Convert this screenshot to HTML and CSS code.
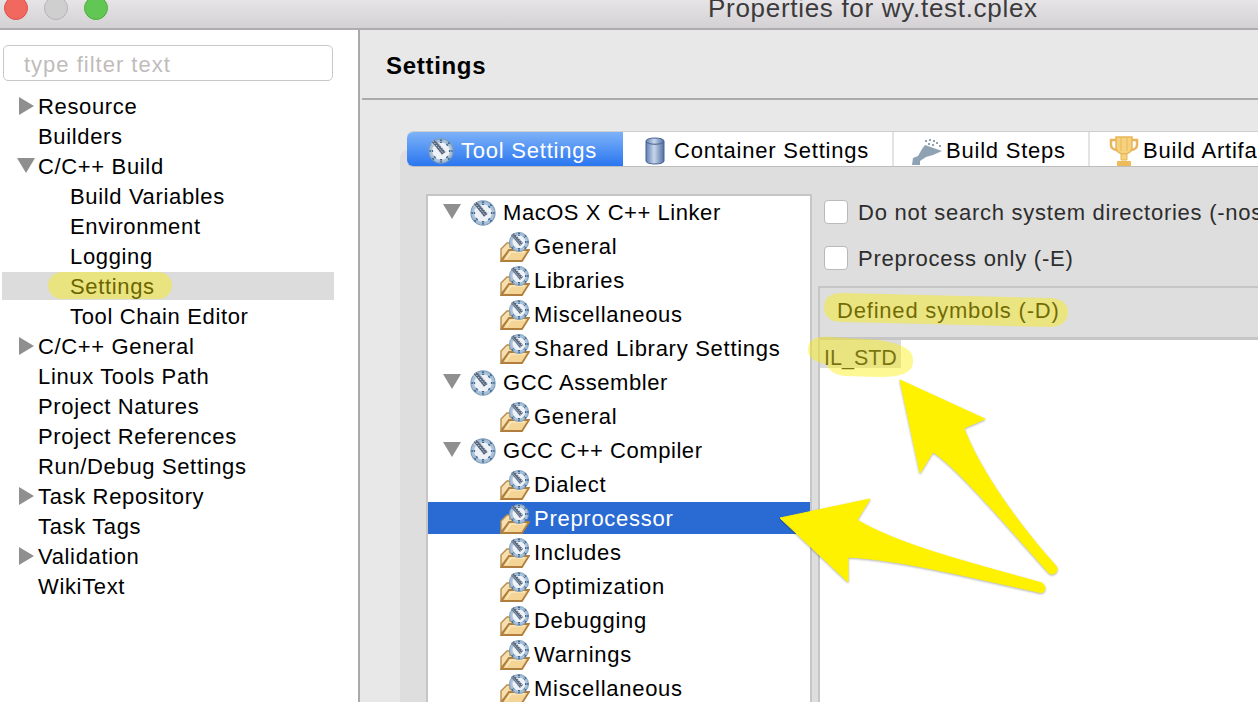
FILE: index.html
```html
<!DOCTYPE html>
<html lang="en">
<head>
  <meta charset="UTF-8">
  <title>Properties for wy.test.cplex</title>
  <link rel="stylesheet" href="styles.css">
</head>
<body>
  <!-- shared icons -->
  <svg class="defs" width="0" height="0">
    <defs>
      <symbol id="gear" viewBox="0 0 28 28">
        <circle cx="14" cy="14" r="13" fill="#a9c1d8"/>
        <circle cx="14" cy="14" r="13" fill="none" stroke="#7f9cb8" stroke-width="1.2"/>
        <circle cx="14" cy="14" r="9.5" fill="#eef2f6"/>
        <path d="M14 1.5v4M14 22.5v4M1.5 14h4M22.500 14h4M23 5l-3 3M23 23l-3-3M5 23l3-3" stroke="#3f6a96" stroke-width="2.4" stroke-dasharray="1.6 1"/>
        <path d="M4 4l4-2 11 13-4 3z" fill="#56677f"/>
        <path d="M5 3l12 14M8 2.500l10 12M4 6l10 11" stroke="#e6ebf0" stroke-width="1" stroke-dasharray="1.5 1.5"/>
      </symbol>
      <symbol id="folder" viewBox="0 0 30 30">
        <path d="M1 28V17l6-6h3v4h9l-10 3z" fill="#f6dfae" stroke="#b88c4f" stroke-width="1.4"/>
        <path d="M1.500 29L9 18h20l-7 11z" fill="#f4d596" stroke="#b07f3e" stroke-width="1.8"/>
        <path d="M6 27l5-7h14" fill="none" stroke="#fdf0d0" stroke-width="1.2"/>
        <circle cx="19" cy="10" r="9.500" fill="#a9c1d8" stroke="#7f9cb8"/>
        <circle cx="19" cy="10" r="6.500" fill="#eef2f6"/>
        <path d="M19 .8v3M19 16v3M25 10h3.500M26 3.500l-2 2M26 16.500l-2-2M12 16.500l2-2" stroke="#3f6a96" stroke-width="2" stroke-dasharray="1.4 .8"/>
        <path d="M11 3l3-2 9 10-3 3z" fill="#56677f"/>
        <path d="M12 2.500l9 10.500M14.500 2l8 9.500" stroke="#e6ebf0" stroke-width=".9" stroke-dasharray="1.300 1.300"/>
      </symbol>
    </defs>
  </svg>

  <div class="window">
    <div class="titlebar">
      <div class="lights">
        <span class="light red"></span>
        <span class="light grey"></span>
        <span class="light green"></span>
      </div>
      <div class="title">Properties for wy.test.cplex</div>
    </div>

    <div class="main">
      <div class="sidebar">
        <div class="filter">type filter text</div>
        <ul class="nav">
          <li><i class="arrow right"></i>Resource</li>
          <li class="top">Builders</li>
          <li><i class="arrow down"></i>C/C++ Build</li>
          <li class="sub">Build Variables</li>
          <li class="sub">Environment</li>
          <li class="sub">Logging</li>
          <li class="sub current">Settings</li>
          <li class="sub">Tool Chain Editor</li>
          <li><i class="arrow right"></i>C/C++ General</li>
          <li class="top">Linux Tools Path</li>
          <li class="top">Project Natures</li>
          <li class="top">Project References</li>
          <li class="top">Run/Debug Settings</li>
          <li><i class="arrow right"></i>Task Repository</li>
          <li class="top">Task Tags</li>
          <li><i class="arrow right"></i>Validation</li>
          <li class="top">WikiText</li>
        </ul>
      </div>

      <div class="content">
        <div class="heading">Settings</div>
        <div class="tabs-area">
          <div class="panel">
            <div class="tool-tree">
              <div class="node"><i class="arrow down"></i><svg class="gear"><use href="#gear"/></svg>MacOS X C++ Linker</div>
              <div class="leaf"><svg class="folder"><use href="#folder"/></svg>General</div>
              <div class="leaf"><svg class="folder"><use href="#folder"/></svg>Libraries</div>
              <div class="leaf"><svg class="folder"><use href="#folder"/></svg>Miscellaneous</div>
              <div class="leaf"><svg class="folder"><use href="#folder"/></svg>Shared Library Settings</div>
              <div class="node"><i class="arrow down"></i><svg class="gear"><use href="#gear"/></svg>GCC Assembler</div>
              <div class="leaf"><svg class="folder"><use href="#folder"/></svg>General</div>
              <div class="node"><i class="arrow down"></i><svg class="gear"><use href="#gear"/></svg>GCC C++ Compiler</div>
              <div class="leaf"><svg class="folder"><use href="#folder"/></svg>Dialect</div>
              <div class="leaf selected"><svg class="folder"><use href="#folder"/></svg>Preprocessor</div>
              <div class="leaf"><svg class="folder"><use href="#folder"/></svg>Includes</div>
              <div class="leaf"><svg class="folder"><use href="#folder"/></svg>Optimization</div>
              <div class="leaf"><svg class="folder"><use href="#folder"/></svg>Debugging</div>
              <div class="leaf"><svg class="folder"><use href="#folder"/></svg>Warnings</div>
              <div class="leaf"><svg class="folder"><use href="#folder"/></svg>Miscellaneous</div>
            </div>
            <div class="options">
              <label class="check"><span class="box"></span>Do not search system directories (-nostdinc)</label>
              <label class="check"><span class="box"></span>Preprocess only (-E)</label>
              <div class="symbols">
                <div class="symbols-head">Defined symbols (-D)</div>
                <div class="symbols-body"><span class="symbol-row">IL_STD</span></div>
              </div>
            </div>
          </div>
          <div class="tabs">
            <div class="tab active"><svg class="gear"><use href="#gear"/></svg>Tool Settings</div>
            <div class="tab container-tab">
              <svg class="tab-icon" width="20" height="28" viewBox="0 0 20 28">
                <defs><linearGradient id="can" x1="0" x2="1"><stop offset="0" stop-color="#5d7fb5"/><stop offset=".45" stop-color="#c9d6ea"/><stop offset="1" stop-color="#4f70a6"/></linearGradient></defs>
                <path d="M1 4c0-4 18-4 18 0v20c0 4-18 4-18 0z" fill="url(#can)" stroke="#47638f"/>
                <path d="M1 5c3 3 15 3 18 0" fill="none" stroke="#47638f"/>
              </svg>
              Container Settings
            </div>
            <div class="tab steps-tab">
              <svg class="tab-icon" width="30" height="28" viewBox="0 0 30 28" fill="#8ea2b4">
                <path d="M13 8l17 6-9 4-7 2-6 4v4H0l1-7 5-2 4-7z"/>
                <path d="M13 3h2v2h-2zM17 2h2v2h-2zM21 3h2v2h-2zM24 5h2v2h-2zM27 8h2v2h-2zM16 6h2v2h-2zM20 7h2v2h-2z"/>
              </svg>
              Build Steps
            </div>
            <div class="tab artifact-tab">
              <svg class="tab-icon" width="32" height="30" viewBox="0 0 32 30">
                <path d="M8 1h16v11c0 4-4 6-8 6s-8-2-8-6z" fill="#f6d27e" stroke="#e8b659" stroke-width="1.500"/>
                <path d="M8 4H3v5c0 3 3 5 6 5M24 4h5v5c0 3-3 5-6 5" fill="none" stroke="#e8b659" stroke-width="2.500"/>
                <path d="M13 2v13M19 2v13" stroke="#e8b659"/>
                <path d="M13 18h6v6h-6z" fill="#f6d27e" stroke="#e8b659"/>
                <rect x="9" y="25" width="14" height="5" fill="#eebb5c"/>
              </svg>
              Build Artifact
            </div>
          </div>
        </div>
      </div>
    </div>

    <!-- markup drawn on top of the screenshot -->
    <svg class="arrows" width="1258" height="702" viewBox="0 0 1258 702">
      <rect class="marker" x="48" y="272" width="124" height="27" rx="13.500"/>
      <path class="marker" d="M824 308C824 298 830 293 842 293L1050 298C1064 299 1068 305 1068 312 1068 322 1060 327 1050 327L842 322C830 322 824 316 824 308z"/>
      <path class="marker" d="M808 350C808 340 815 336 830 337L880 340C905 345 914 350 913 362 913 373 900 377 880 377L845 376C832 375 828 368 826 364 815 362 808 358 808 350z"/>
      <path class="arrow-shape" d="M900 380L985 419 964 428C975 460 1010 515 1056 566 1060 572 1052 577 1048 572 1010 530 960 470 933 452L920 473z"/>
      <path class="arrow-shape" d="M780 518L870 499 857 520C900 545 960 560 1042 583 1048 588 1044 595 1038 592 960 575 900 560 848 557L848 582z"/>
    </svg>
  </div>
</body>
</html>
```

FILE: styles.css
```css
body {
  margin: 0;
  font-family: "Liberation Sans", Arial, sans-serif;
  font-size: 22px;
  letter-spacing: 0.65px;
  color: #000;
  background: #e8e8e8;
}
.defs {
  display: block;
  height: 0;
}
.window {
  position: relative;
  width: 1258px;
  height: 702px;
  overflow: hidden;
  display: flex;
  flex-direction: column;
}

/* title bar */
.titlebar {
  box-sizing: border-box;
  height: 30px;
  flex: none;
  display: flex;
  align-items: center;
  padding: 0 0 12px 4px;
  background: linear-gradient(#e6e4e6, #d3d1d3);
  border-bottom: 2px solid #aeacae;
}
.lights {
  display: flex;
  gap: 16px;
}
.light {
  box-sizing: border-box;
  width: 24px;
  height: 24px;
  border-radius: 50%;
  border: 1px solid;
}
.red {
  background: #f1685e;
  border-color: #de5248;
}
.grey {
  background: #d0cfd0;
  border-color: #b5b4b5;
}
.green {
  background: #62c654;
  border-color: #4eae42;
}
.title {
  margin-left: 600px;
  font-size: 26px;
  letter-spacing: 0.7px;
  color: #3c3a3c;
  white-space: nowrap;
}

.main {
  flex: 1;
  display: flex;
  min-height: 0;
}

/* left tree */
.sidebar {
  box-sizing: border-box;
  width: 360px;
  flex: none;
  background: #fff;
  border-right: 2px solid #a9a9a9;
  padding: 15px 0 0 0;
}
.filter {
  box-sizing: border-box;
  width: 330px;
  height: 36px;
  margin-left: 3px;
  padding-left: 20px;
  line-height: 37px;
  letter-spacing: 1px;
  color: #c0bcbc;
  border: 1px solid #c8c8c8;
  border-radius: 5px;
}
.nav {
  list-style: none;
  margin: 11px 0 0 0;
  padding: 0 0 0 2px;
  width: 332px;
}
.nav li {
  box-sizing: border-box;
  height: 30px;
  line-height: 30px;
  padding-left: 36px;
  position: relative;
  white-space: nowrap;
}
.nav li.sub {
  padding-left: 68px;
}
.nav li.current {
  background: #dcdcdc;
  border-bottom: 2px solid #fff;
}
.arrow {
  position: absolute;
  width: 0;
  height: 0;
}
.arrow.right {
  left: 17px;
  top: 5px;
  border-left: 15px solid #8f8f8f;
  border-top: 9px solid transparent;
  border-bottom: 9px solid transparent;
}
.arrow.down {
  left: 15px;
  top: 6px;
  border-top: 15px solid #8f8f8f;
  border-left: 9px solid transparent;
  border-right: 9px solid transparent;
}

/* right side */
.content {
  flex: 1;
  min-width: 0;
  display: flex;
  flex-direction: column;
  background: #e8e8e8;
}
.heading {
  box-sizing: border-box;
  height: 70px;
  flex: none;
  margin-left: 2px;
  padding: 22px 0 0 24px;
  font-size: 24px;
  font-weight: bold;
  letter-spacing: 0.7px;
  border-bottom: 2px solid #aaa;
}
.tabs-area {
  position: relative;
  flex: 1;
  padding: 50px 0 0 40px;
}
.panel {
  display: flex;
  height: 100%;
  padding: 44px 0 0 26px;
  background: #dedede;
  border-radius: 8px 0 0 0;
  box-sizing: border-box;
}
.tabs {
  position: absolute;
  left: 47px;
  top: 32px;
  height: 34px;
  display: flex;
  letter-spacing: 0.78px;
  background: #fff;
  border-bottom: 1px solid #bdbdbd;
  box-shadow: 0 -1px 0 #cfcfcf;
  border-radius: 6px 0 0 6px;
  width: 860px;
}
.tab {
  display: flex;
  flex: none;
  align-items: center;
  white-space: nowrap;
  height: 34px;
  padding-top: 4px;
  border-right: 2px solid #e4e4e4;
  box-sizing: border-box;
}
.tab-icon {
  flex: none;
}
.tab.active {
  width: 216px;
  padding-left: 21px;
  gap: 7px;
  color: #fff;
  background: linear-gradient(#7db2f8, #2a76f0);
  border: 0;
  border-radius: 6px 0 0 6px;
}
.container-tab {
  width: 271px;
  padding-left: 22px;
  gap: 9px;
}
.steps-tab {
  width: 196px;
  padding-left: 18px;
  gap: 4px;
}
.artifact-tab {
  width: 240px;
  padding-left: 18px;
  gap: 3px;
  border: 0;
}
.gear {
  width: 26px;
  height: 26px;
  flex: none;
}
.folder {
  width: 30px;
  height: 30px;
  flex: none;
}

/* tool tree */
.tool-tree {
  box-sizing: border-box;
  width: 386px;
  flex: none;
  letter-spacing: 0.72px;
  background: #fff;
  border: 2px solid #c6c6c6;
  border-bottom: 0;
  overflow: hidden;
}
.node, .leaf {
  box-sizing: border-box;
  height: 34px;
  padding-top: 2px;
  display: flex;
  align-items: center;
  white-space: nowrap;
  position: relative;
}
.node:first-child {
  margin-top: -1px;
}
.node {
  padding-left: 42px;
  gap: 7px;
  letter-spacing: 0.55px;
}
.node .arrow.down {
  left: 15px;
  top: 9px;
}
.leaf {
  padding-left: 72px;
  gap: 4px;
}
.leaf.selected {
  background: #2a6bd3;
  background-clip: padding-box;
  border-top: 1px solid transparent;
  border-bottom: 1px solid transparent;
  color: #fff;
}

/* options on the right */
.options {
  flex: 1;
  min-width: 0;
  margin-top: -4px;
  padding-left: 6px;
  letter-spacing: 0.75px;
}
.check {
  height: 46px;
  display: flex;
  align-items: center;
  gap: 10px;
  padding-left: 6px;
  color: #2d2d2d;
  white-space: nowrap;
}
.box {
  box-sizing: border-box;
  width: 24px;
  height: 24px;
  margin-top: -2px;
  background: #fff;
  border: 1px solid #b9b9b9;
  border-radius: 4px;
  flex: none;
}
.symbols {
  margin-top: 4px;
  border-left: 2px solid #c6c6c6;
  border-top: 2px solid #c6c6c6;
}
.symbols-head {
  height: 52px;
  line-height: 46px;
  padding-left: 17px;
  letter-spacing: 0.8px;
  color: #0c0c0c;
  border-bottom: 3px solid #c6c6c6;
  box-sizing: border-box;
}
.symbols-body {
  height: 400px;
  background: #fff;
}
.symbol-row {
  display: block;
  box-sizing: border-box;
  width: 81px;
  height: 28px;
  line-height: 36px;
  padding-left: 4px;
  font-size: 21.5px;
  letter-spacing: 0;
  background: #dcdcdc;
  color: #1c1c1c;
}

/* annotations */
.arrows {
  position: absolute;
  left: 0;
  top: 0;
}
.marker {
  fill: rgba(250, 235, 0, 0.42);
}
.arrow-shape {
  fill: #fff200;
  stroke: #fff200;
  stroke-width: 1;
  filter: drop-shadow(0 1px 1px rgba(0, 0, 0, 0.3));
}
```
